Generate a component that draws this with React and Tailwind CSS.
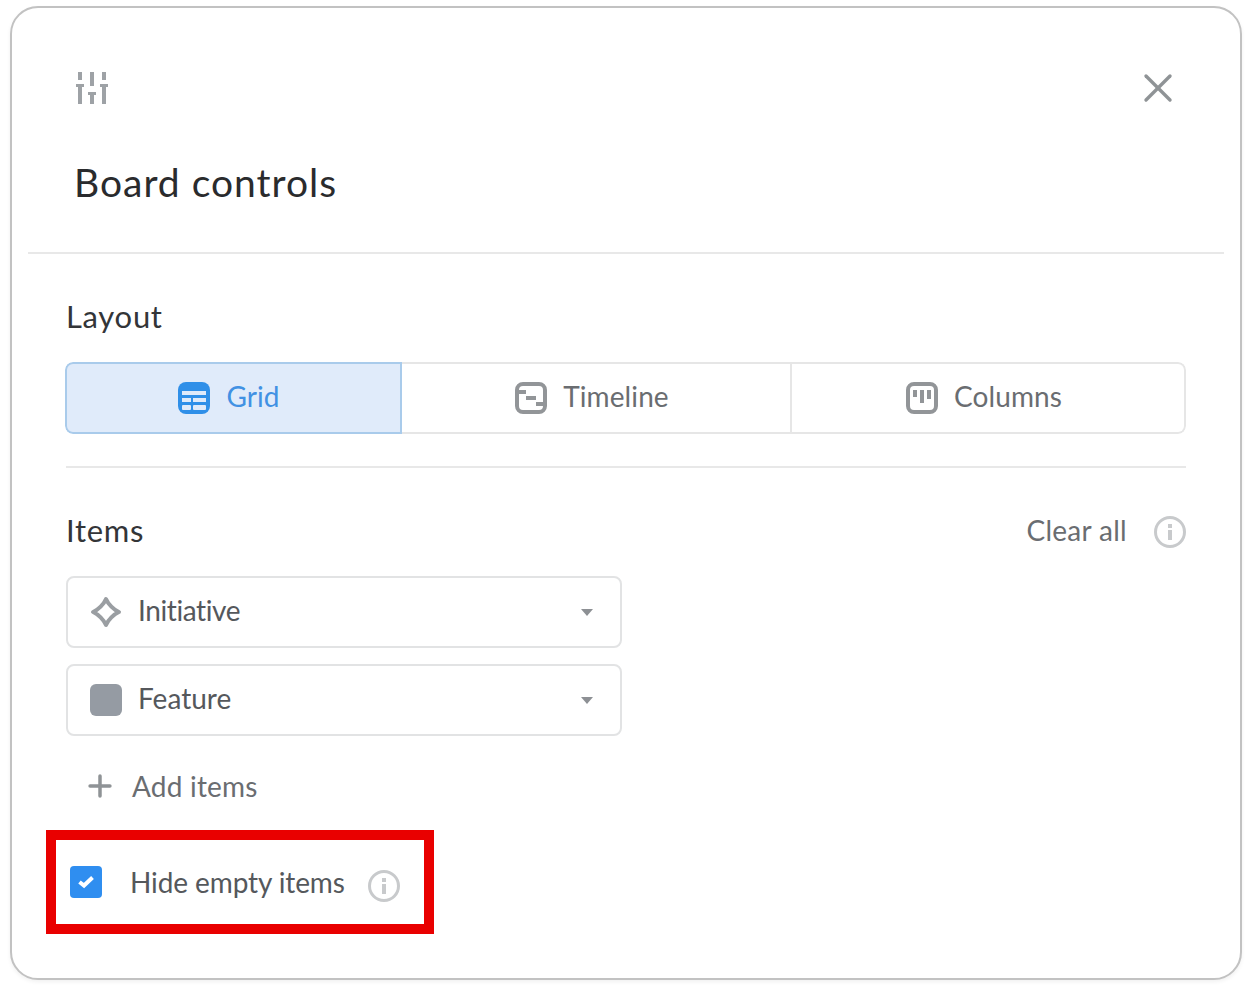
import { Plus, X } from "lucide-react";

const font = { fontFamily: '"Lato", "Liberation Sans", sans-serif' };

const InfoIcon = () => (
  <svg width="32" height="32" viewBox="0 0 32 32" fill="none" className="shrink-0">
    <circle cx="16" cy="16" r="14.5" stroke="#c8cacc" strokeWidth="3" />
    <rect x="14" y="14" width="4" height="10" fill="#c8cacc" />
    <rect x="14" y="8" width="4" height="4" fill="#c8cacc" />
  </svg>
);

const Caret = () => (
  <svg width="14" height="9" viewBox="0 0 14 9" className="shrink-0">
    <path d="M1 1h12L7 8z" fill="#8d9094" />
  </svg>
);

const SlidersIcon = () => (
  <svg width="34" height="34" viewBox="0 0 34 34" fill="#9ea2a6" className="ml-px shrink-0">
    <rect x="3" y="1" width="4" height="8" />
    <rect x="15" y="1" width="4" height="14" />
    <rect x="27" y="1" width="4" height="8" />
    <rect x="1" y="13" width="8" height="3" />
    <rect x="25" y="13" width="8" height="3" />
    <rect x="13" y="21" width="8" height="3" />
    <rect x="3" y="16" width="4" height="17" />
    <rect x="15" y="24" width="4" height="9" />
    <rect x="27" y="16" width="4" height="17" />
  </svg>
);

const GridIcon = () => (
  <svg width="32" height="32" viewBox="0 0 32 32" className="-ml-px shrink-0">
    <rect width="32" height="32" rx="8" fill="#2f8fe8" />
    <rect x="4" y="9" width="24" height="4" fill="#dfeafa" />
    <rect x="4" y="16" width="9" height="4" fill="#dfeafa" />
    <rect x="15" y="16" width="13" height="4" fill="#dfeafa" />
    <rect x="4" y="23" width="9" height="5" rx="1" fill="#dfeafa" />
    <rect x="15" y="23" width="13" height="5" rx="1" fill="#dfeafa" />
  </svg>
);

const TimelineIcon = () => (
  <svg width="32" height="32" viewBox="0 0 32 32" fill="none" className="shrink-0">
    <rect x="2" y="2" width="28" height="28" rx="6" stroke="#929598" strokeWidth="4" />
    <rect x="3" y="8" width="8" height="4" fill="#929598" />
    <rect x="11" y="14" width="10" height="4" fill="#929598" />
    <rect x="21" y="20" width="8" height="4" fill="#929598" />
  </svg>
);

const ColumnsIcon = () => (
  <svg width="32" height="32" viewBox="0 0 32 32" fill="none" className="shrink-0">
    <rect x="2" y="2" width="28" height="28" rx="6" stroke="#929598" strokeWidth="4" />
    <rect x="7" y="8" width="4" height="7" fill="#929598" />
    <rect x="14" y="8" width="4" height="13" fill="#929598" />
    <rect x="21" y="8" width="4" height="9" fill="#929598" />
  </svg>
);

const DiamondIcon = () => (
  <svg width="32" height="32" viewBox="0 0 32 32" fill="none" className="shrink-0">
    <path d="M16 3 C18 8 24 14 29 16 C24 18 18 24 16 29 C14 24 8 18 3 16 C8 14 14 8 16 3 Z" stroke="#9a9ea2" strokeWidth="4" strokeLinejoin="round" />
  </svg>
);

const Select = ({ icon, label, className = "" }) => (
  <div className="flex h-[72px] w-[556px] items-center rounded-lg border-2 border-[#e2e3e4] pl-[22px] pr-[26px]">
    {icon}
    <span className={`ml-4 flex-1 pb-1 text-[28px] text-[#55585c] ${className}`}>{label}</span>
    <Caret />
  </div>
);

const Segment = ({ icon, label, active, className }) => (
  <div
    className={`flex h-full items-center justify-center gap-4 pr-[8px] text-[28px] tracking-[0.1px] ${className} ${
      active ? "bg-[#e0ebfa] text-[#4191e3]" : "text-[#6a6d71]"
    }`}
  >
    {icon}
    <span className="pb-[5px]">{label}</span>
  </div>
);

export default function App() {
  return (
    <div className="h-[994px] w-[1252px] bg-white pl-[10px] pt-[6px]" style={font}>
      <div className="h-[974px] w-[1232px] rounded-[28px] border-2 border-[#c2c2c2] bg-white px-4 shadow-[0_2px_4px_rgba(0,0,0,0.06)]">
        {/* Header */}
        <div className="h-[246px] border-b-2 border-[#e8e8e8] pl-[46px] pr-[42px] pt-[56px]">
          <div className="flex items-center justify-between">
            <SlidersIcon />
            <X size={48} strokeWidth={3.4} color="#8f9396" absoluteStrokeWidth />
          </div>
          <h1 className="mt-[48px] text-[39px] font-normal leading-[44px] tracking-[1px] text-[#2a2b2d]">Board controls</h1>
        </div>

        <div className="pl-[38px] pr-[38px]">
          {/* Layout */}
          <h2 className="mt-[44px] text-[31px] leading-9 tracking-[0.7px] text-[#333538]">Layout</h2>
          <div className="ml-[-1px] mt-[28px] flex h-[72px] w-[1121px] overflow-hidden rounded-lg">
            <Segment
              icon={<GridIcon />}
              label="Grid"
              active
              className="w-[337px] rounded-l-lg border-2 border-[#a9cbeb]"
            />
            <Segment
              icon={<TimelineIcon />}
              label="Timeline"
              className="w-[390px] border-y-2 border-r-2 border-[#e6e6e6]"
            />
            <Segment
              icon={<ColumnsIcon />}
              label="Columns"
              className="w-[394px] rounded-r-lg border-y-2 border-r-2 border-[#e6e6e6]"
            />
          </div>
          <div className="mt-[32px] h-[2px] w-[1120px] bg-[#e8e8e8]" />

          {/* Items */}
          <div className="mt-[44px] flex h-9 w-[1120px] items-center justify-between">
            <h2 className="text-[31px] tracking-[0.7px] text-[#333538]">Items</h2>
            <div className="flex items-center gap-[27px]">
              <span className="text-[28px] tracking-[0.3px] text-[#6a6d71]">Clear all</span>
              <div className="mt-1">
                <InfoIcon />
              </div>
            </div>
          </div>
          <div className="mt-[28px] flex flex-col gap-4">
            <Select icon={<DiamondIcon />} label="Initiative" className="tracking-[-0.4px]" />
            <Select icon={<div className="h-8 w-8 rounded-md bg-[#959ba3]" />} label="Feature" />
          </div>
          <div className="ml-[17px] mt-[32px] flex h-9 items-center gap-[15px]">
            <Plus size={34} strokeWidth={3.5} color="#8f9396" absoluteStrokeWidth />
            <span className="text-[28px] tracking-[0.2px] text-[#6a6d71]">Add items</span>
          </div>

          {/* Hide empty items */}
          <div className="ml-[-20px] mt-[26px] flex h-[104px] w-[388px] items-center border-[10px] border-[#e90000] pl-[14px]">
            <div className="flex h-8 w-8 shrink-0 items-center justify-center rounded bg-[#2f8ef0]">
              <svg width="18" height="14" viewBox="0 0 18 14" fill="none">
                <path d="M2.5 7 L7 10.5 L15.5 2.5" stroke="#ffffff" strokeWidth="4" />
              </svg>
            </div>
            <span className="ml-[28px] text-[28px] tracking-[-0.1px] text-[#55585c]">Hide empty items</span>
            <div className="ml-[23px] mt-[8px]">
              <InfoIcon />
            </div>
          </div>
        </div>
      </div>
    </div>
  );
}
